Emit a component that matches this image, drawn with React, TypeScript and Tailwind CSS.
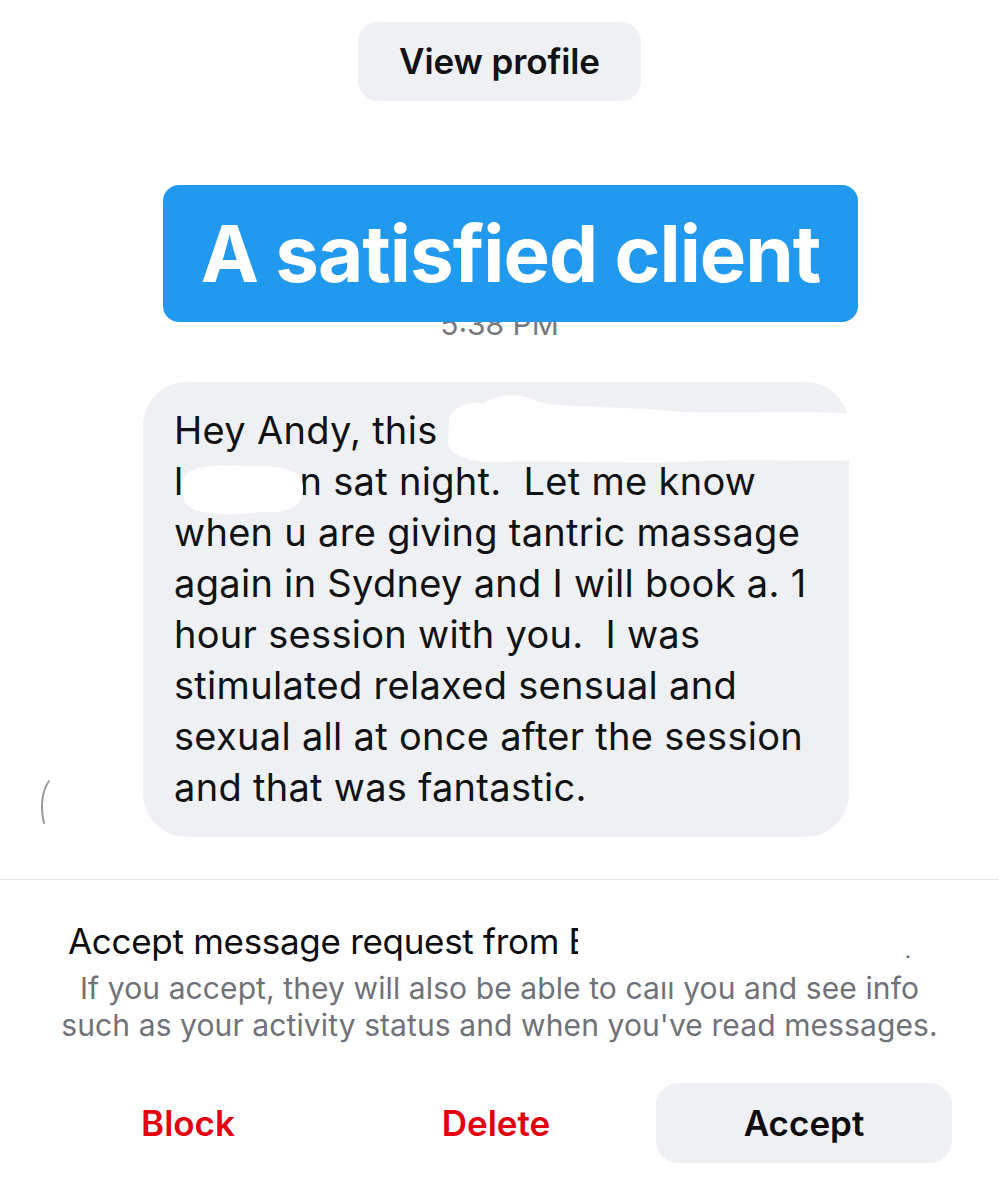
import React from 'react';

const SF = { fontFamily: 'Inter, "Liberation Sans", sans-serif' };

const App: React.FC = () => {
  return (
    <div className="w-full h-[1200px] bg-white overflow-hidden text-[#0d0d0f]" style={SF}>
      {/* Header: profile + label */}
      <div className="flex flex-col items-center pt-[22px]">
        <button className="w-[283px] h-[79px] rounded-[20px] bg-[#eef0f3] text-[35px] font-semibold tracking-[-0.1px] text-[#111214]">
          View profile
        </button>

        <div className="relative z-10 mt-[84px] ml-[22px] w-[695px] h-[137px] rounded-[16px] bg-[#2199ee] flex items-center justify-center">
          <span className="text-[78px] font-bold text-white tracking-[-1px] leading-none">A satisfied client</span>
        </div>
        <div className="-mt-[16px] text-[30px] leading-[36px] text-[#77777c]">5:38 PM</div>
      </div>

      {/* Message row */}
      <div className="flex items-end mt-[40px]">
        <div className="w-[143px] flex justify-start pl-[38px] pb-[2px]">
          <svg width="14" height="56" viewBox="0 0 14 56">
            <path d="M11 2 C4 12 2 28 6 44" stroke="#9a9a9a" strokeWidth="2" fill="none" strokeLinecap="round" />
          </svg>
        </div>
        <div className="relative w-[706px] rounded-[44px] bg-[#eef0f3] pl-[31px] pr-[10px] pt-[23px] pb-[24px] text-[38px] leading-[51px] tracking-[0.3px] text-[#111214]">
          <div className="whitespace-pre">Hey Andy, this is</div>
          <div className="whitespace-pre">l<span className="inline-block w-[116px]" />n sat night.  Let me know</div>
          <div>when u are giving tantric massage</div>
          <div>again in Sydney and I will book a. 1</div>
          <div className="whitespace-pre">hour session with you.  I was</div>
          <div>stimulated relaxed sensual and</div>
          <div>sexual all at once after the session</div>
          <div>and that was fantastic.</div>

          {/* redaction blobs */}
          <svg className="absolute left-[300px] top-[8px]" width="420" height="76" viewBox="0 0 420 76">
            <path
              d="M6 30 C8 16 30 10 40 14 C50 4 80 2 96 12 C120 18 180 16 240 22 C300 24 360 20 420 24 L420 70 C360 72 300 68 240 72 C180 74 120 70 60 72 C30 74 8 66 5 54 Z"
              fill="#ffffff"
            />
          </svg>
          <svg className="absolute left-[36px] top-[80px]" width="128" height="56" viewBox="0 0 128 56">
            <path d="M6 14 C12 4 40 2 70 4 C100 2 124 8 124 24 C126 44 110 52 80 50 C50 54 14 54 6 40 C2 30 2 20 6 14 Z" fill="#ffffff" />
          </svg>
        </div>
      </div>

      {/* Divider */}
      <div className="mt-[42px] border-t border-[#e4e4e6]" />

      {/* Request text */}
      <div className="relative mt-[41px] pl-[68px] text-[35px] leading-[40px] tracking-[-0.3px] text-[#0d0d0f]">
        Accept message request from E
        <span className="absolute left-[905px] top-[10px] text-[20px] text-[#555]">.</span>
        <div className="absolute left-[578px] top-0 w-[300px] h-[40px] bg-white" />
      </div>
      <div className="mt-[9px] text-center text-[30px] leading-[37px] tracking-[0.1px] text-[#6f7278]">
        <div>If you accept, they will also be able to caıı you and see info</div>
        <div>such as your activity status and when you've read messages.</div>
      </div>

      {/* Actions */}
      <div className="mt-[39px] grid grid-cols-[296px_296px_296px] gap-3 pl-10">
        <button className="h-[80px] text-[35px] font-semibold text-[#e3000f]">Block</button>
        <button className="h-[80px] text-[35px] font-semibold text-[#e3000f]">Delete</button>
        <button className="h-[80px] rounded-[22px] bg-[#eef0f3] text-[35px] font-semibold text-[#0d0d0f]">Accept</button>
      </div>
    </div>
  );
};

export default App;
